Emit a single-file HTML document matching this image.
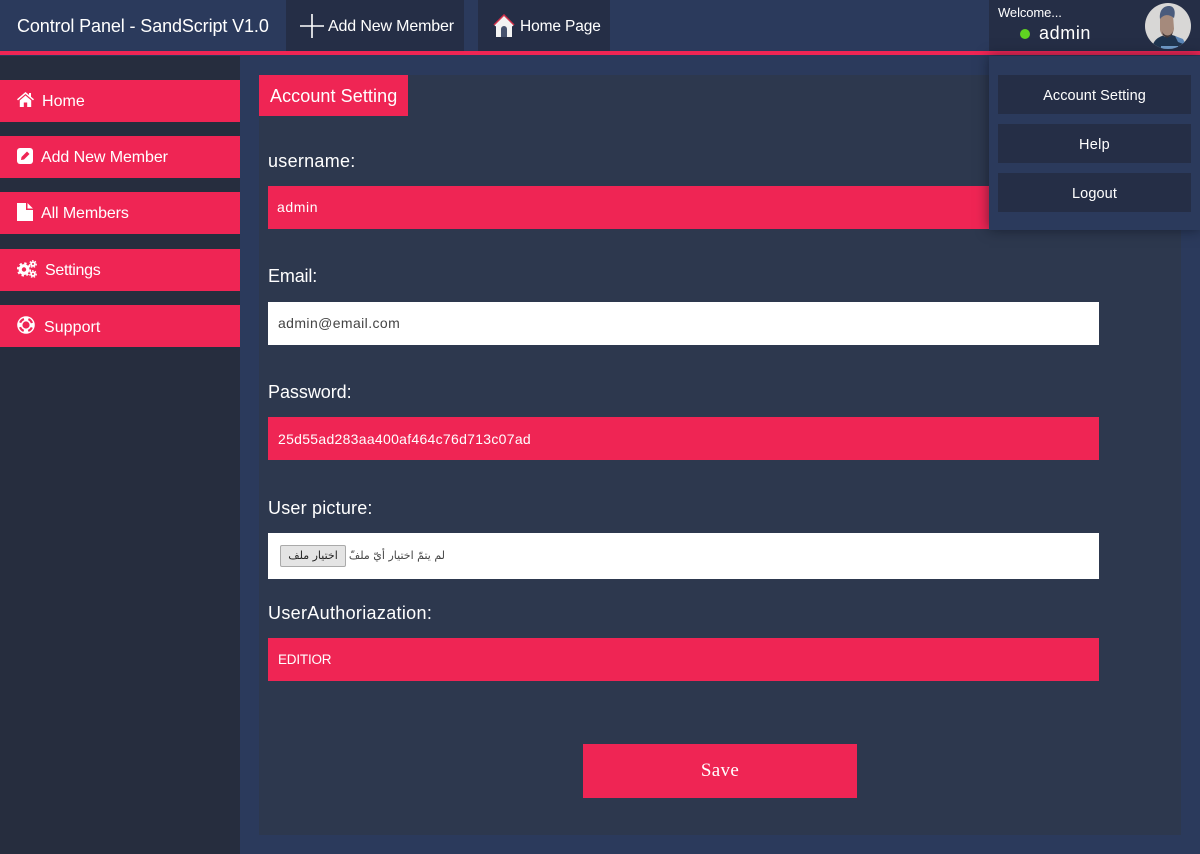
<!DOCTYPE html>
<html lang="en"><head><meta charset="utf-8"><title>Control Panel</title>
<style>
html,body{margin:0;padding:0}
body{width:1200px;height:854px;position:relative;overflow:hidden;background:#2b3a5c;color:#fff;font-family:"Liberation Sans","DejaVu Sans",sans-serif}
.a{position:absolute;white-space:nowrap}
.r{background:#ef2554}
.d{background:#252e46}
.s{left:0;width:240px;height:42px;background:#ef2554}
.t{font-size:16px;line-height:22px}
.f{left:268px;width:831px;font-size:14px;line-height:43px;text-indent:10px;letter-spacing:.4px}
.l{left:268px;font-size:18px;letter-spacing:.2px;line-height:22px}
.m{left:998px;width:193px;height:39px;line-height:41px;background:#252e46;text-align:center;font-size:14.5px;padding-top:0}
svg{position:absolute}
</style></head><body>
<div class="a" style="left:0;top:56px;width:240px;height:798px;background:#262d3e"></div>
<div class="a" style="left:259px;top:75px;width:922px;height:760px;background:#2d384e"></div>
<div class="a" style="left:0;top:0;width:1200px;height:51px;background:#2b3a5c"></div>
<div class="a r" style="left:0;top:51px;width:1200px;height:4px"></div>
<div class="a" style="left:0;top:55px;width:1200px;height:1px;background:#2b3a5c"></div>

<div class="a" style="left:17px;top:14px;font-size:18px;line-height:24px;letter-spacing:-.11px">Control Panel - SandScript V1.0</div>
<div class="a d" style="left:286px;top:0;width:178px;height:51px"></div>
<svg style="left:300px;top:14px" width="24" height="24"><path d="M12 0V24M0 12H24" stroke="#fff" stroke-width="1.6"/></svg>
<div class="a t" style="left:328px;top:16px;letter-spacing:-.15px">Add New Member</div>
<div class="a d" style="left:478px;top:0;width:132px;height:51px"></div>
<svg style="left:493px;top:14px" width="22" height="24" viewBox="0 0 22 24"><path d="M11 1L1 11 3 12.500V23H19V12.500L21 11Z" fill="#f3f3f3"/><path d="M1 11L11 1 21 11" fill="none" stroke="#d0304a" stroke-width="1.500"/><path d="M8 23V15a3 3 0 0 1 6 0V23Z" fill="#46526e"/></svg>
<div class="a" style="left:520px;top:16px;font-size:15.5px;line-height:22px;letter-spacing:-.12px">Home Page</div>

<div class="a d" style="left:989px;top:0;width:211px;height:51px"></div>
<div class="a" style="left:998px;top:4px;font-size:13px;line-height:17px;letter-spacing:-.1px">Welcome...</div>
<div class="a" style="left:1020px;top:29px;width:10px;height:10px;border-radius:50%;background:#5fd321"></div>
<div class="a" style="left:1039px;top:22px;font-size:18px;line-height:23px;letter-spacing:.6px">admin</div>
<svg style="left:1145px;top:3px" width="46" height="46" viewBox="0 0 46 46"><defs><clipPath id="c"><circle cx="23" cy="23" r="23"/></clipPath></defs><g clip-path="url(#c)"><rect width="46" height="46" fill="#d8d7d6"/><path d="M7 46C8 37 13 34 20 32H27C34 34 38 37 40 46Z" fill="#1f3550"/><path d="M30 33L38 36 41 42 33 39Z" fill="#5b86b8"/><path d="M15 12H28L29 26C28 32 25 34 22 34 19 34 16 32 15 27Z" fill="#a58a7c"/><path d="M15 16C14 8 18 3 24 3 29 3 31 8 29 15 24 11 19 11 15 16Z" fill="#4a5b7c"/><path d="M17 28C19 34 26 34 28 28L27 32 22 35 18 32Z" fill="#3c3436"/><path d="M16 43H33V46H16Z" fill="#6f9bc9"/></g></svg>

<div class="a s" style="top:80px"></div>
<svg style="left:17px;top:92px" width="17" height="15" viewBox="0 0 17 15"><path d="M8.500 0L0 7.300 1 8.400 8.500 2 16 8.400 17 7.300 14 4.700V1H12V3Z" fill="#fff"/><path d="M8.500 3.500L2.800 8.400V15H6.800V10.500H10.200V15H14.200V8.400Z" fill="#fff"/></svg>
<div class="a t" style="left:42px;top:91px;letter-spacing:.05px">Home</div>
<div class="a s" style="top:136px"></div>
<svg style="left:17px;top:148px" width="16" height="16" viewBox="0 0 16 16"><rect width="16" height="16" rx="3" fill="#fff"/><path d="M4 12L4.500 9 10 3.500 12.500 6 7 11.500Z" fill="#ef2554"/></svg>
<div class="a t" style="left:41px;top:147px;letter-spacing:-.08px">Add New Member</div>
<div class="a s" style="top:192px"></div>
<svg style="left:17px;top:203px" width="16" height="18" viewBox="0 0 16 18"><path d="M0 0H9V7H16V18H0ZM10.500 0L16 5.500H10.500Z" fill="#fff"/></svg>
<div class="a t" style="left:41px;top:203px;letter-spacing:-.1px">All Members</div>
<div class="a s" style="top:249px"></div>
<svg style="left:17px;top:260px" width="20" height="18" viewBox="0 0 20 18"><circle cx="7" cy="9.500" r="3.800" fill="none" stroke="#fff" stroke-width="3.200"/><circle cx="7" cy="9.500" r="6.200" fill="none" stroke="#fff" stroke-width="1.800" stroke-dasharray="2.400 2.470"/><circle cx="16" cy="4" r="1.900" fill="none" stroke="#fff" stroke-width="1.800"/><circle cx="16" cy="4" r="3.300" fill="none" stroke="#fff" stroke-width="1.200" stroke-dasharray="1.500 1.400"/><circle cx="16" cy="14" r="1.900" fill="none" stroke="#fff" stroke-width="1.800"/><circle cx="16" cy="14" r="3.300" fill="none" stroke="#fff" stroke-width="1.200" stroke-dasharray="1.500 1.400"/></svg>
<div class="a t" style="left:45px;top:260px;letter-spacing:-.3px">Settings</div>
<div class="a s" style="top:305px"></div>
<svg style="left:17px;top:316px" width="18" height="18" viewBox="0 0 18 18"><circle cx="9" cy="9" r="8.800" fill="#fff"/><circle cx="9" cy="9" r="6.300" fill="none" stroke="#ef2554" stroke-width="2.200" stroke-dasharray="5.400 4.500" stroke-dashoffset="2.700" transform="rotate(45 9 9)"/><circle cx="9" cy="9" r="3.600" fill="#ef2554"/></svg>
<div class="a t" style="left:44px;top:317px;letter-spacing:.05px">Support</div>

<div class="a r" style="left:259px;top:75px;width:149px;height:41px"></div>
<div class="a" style="left:270px;top:85px;font-size:18px;line-height:23px;letter-spacing:.08px">Account Setting</div>

<div class="a l" style="top:150px;letter-spacing:.28px">username:</div>
<div class="a f r" style="top:186px;height:43px;text-indent:9px;letter-spacing:.6px">admin</div>
<div class="a l" style="top:265px;letter-spacing:-.15px">Email:</div>
<div class="a f" style="top:302px;height:43px;background:#fff;color:#444">admin@email.com</div>
<div class="a l" style="top:381px;letter-spacing:-.05px">Password:</div>
<div class="a f r" style="top:417px;height:43px;line-height:45px;letter-spacing:.29px">25d55ad283aa400af464c76d713c07ad</div>
<div class="a l" style="top:497px;letter-spacing:.2px">User picture:</div>
<div class="a" style="left:268px;top:533px;width:831px;height:46px;background:#fff"></div>
<div class="a" style="left:280px;top:545px;width:66px;height:22px;box-sizing:border-box;border:1px solid #aaa;border-radius:2px;background:#e4e4e4;color:#222;font:11px/20px 'DejaVu Sans',sans-serif;text-align:center" dir="rtl">اختيار ملف</div>
<div class="a" style="left:349px;top:546px;width:96px;color:#444;font:11px/20px 'DejaVu Sans',sans-serif;text-align:center" dir="rtl">لم يتمّ اختيار أيّ ملفّ</div>
<div class="a l" style="top:602px;letter-spacing:.32px">UserAuthoriazation:</div>
<div class="a f r" style="top:638px;height:43px;font-size:13.5px;letter-spacing:-.2px">EDITIOR</div>
<div class="a r" style="left:583px;top:744px;width:274px;height:54px;line-height:54px;text-align:center;font-family:'Liberation Serif',serif;font-size:19px;letter-spacing:.3px">Save</div>

<div class="a" style="left:989px;top:56px;width:211px;height:174px;background:#2b3a5c;box-shadow:0 0 12px rgba(10,14,25,.55)"></div>
<div class="a m" style="top:75px;line-height:42px;letter-spacing:.08px">Account Setting</div>
<div class="a m" style="top:124px;line-height:42px;letter-spacing:.3px">Help</div>
<div class="a m" style="top:173px;line-height:42px;letter-spacing:.1px">Logout</div>
</body></html>
